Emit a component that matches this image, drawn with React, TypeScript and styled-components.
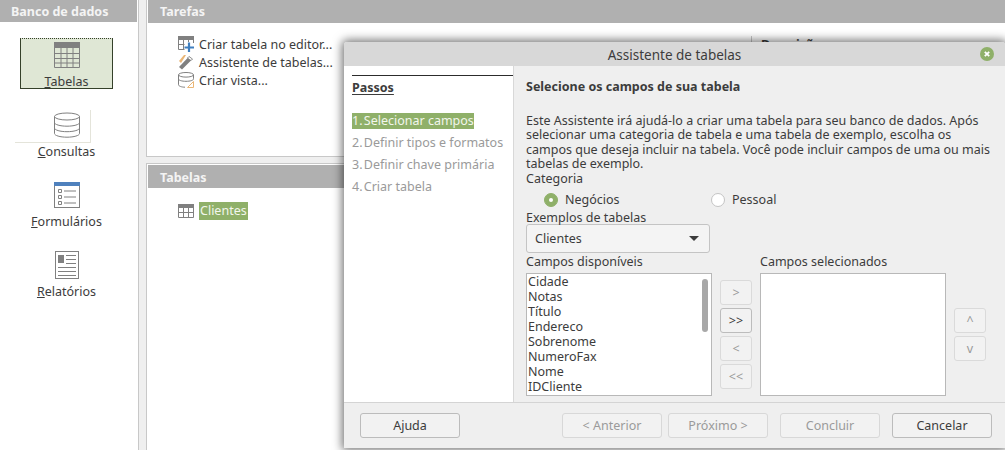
import React from "react";
import styled, { createGlobalStyle } from "styled-components";

const GlobalStyle = createGlobalStyle`
  html, body {
    margin: 0;
    padding: 0;
    width: 1005px;
    height: 450px;
    overflow: hidden;
    background: #efefef;
  }
  body {
    font-family: "Noto Sans", "Open Sans", sans-serif;
    font-size: 12.5px;
    color: #3c3c3c;
  }
`;

const TableIcon = () => (
  <svg width="26" height="26" viewBox="0 0 26 26">
    <rect x="0" y="0" width="26" height="6" fill="#808080" />
    <path d="M.5 6v19.5h25V6M.5 11.5h25M.5 16.5h25M.5 21h25M7 6v19.5M13 6v19.5M19 6v19.5" fill="none" stroke="#808080" />
  </svg>
);

const DatabaseIcon = () => (
  <svg width="26" height="26" viewBox="0 0 26 26">
    <ellipse cx="13" cy="4.500" rx="12.500" ry="3.500" fill="#fff" stroke="#808080" />
    <path d="M.5 4.500v17c0 2 5.500 3.700 12.500 3.700s12.500-1.700 12.500-3.700v-17M.5 10.500c0 2 5.500 3.700 12.500 3.700s12.500-1.700 12.500-3.700M.5 16c0 2 5.500 3.700 12.500 3.700S25.500 18 25.500 16" fill="none" stroke="#808080" />
  </svg>
);

const FormIcon = () => (
  <svg width="26" height="26" viewBox="0 0 26 26">
    <rect x=".5" y=".5" width="25" height="25" fill="#fff" stroke="#808080" />
    <rect x="0" y="0" width="26" height="4" fill="#4f81bd" />
    <path d="M4.500 7.500h3v3h-3zM4.500 13.500h3v3h-3zM4.500 19.500h3v3h-3z" fill="none" stroke="#808080" />
    <path d="M10 9h12M10 15h12M10 21h12" fill="none" stroke="#808080" />
  </svg>
);

const ReportIcon = () => (
  <ReportSvg width="24" height="28" viewBox="0 0 24 28">
    <rect x=".5" y=".5" width="23" height="27" fill="#fff" stroke="#808080" />
    <rect x="3" y="4" width="6" height="8" fill="#808080" />
    <path d="M11 4.500h10M11 8.500h10M11 12.500h10M3 16.500h18M3 20.500h18M3 24.500h18" fill="none" stroke="#808080" />
  </ReportSvg>
);

const SmallTableAddIcon = () => (
  <svg width="16" height="16" viewBox="0 0 16 16">
    <rect x="0" y="0" width="16" height="4" fill="#808080" />
    <path d="M.5 4v9.500h6M15.500 4v3M.5 8.500h6M5.500 4v9.500M10.500 4v2" fill="none" stroke="#808080" />
    <path d="M11 6.500v9.500M6.500 11.500h9.500" fill="none" stroke="#3f7fbf" strokeWidth="2.200" />
  </svg>
);

const WizardIcon = () => (
  <svg width="16" height="16" viewBox="0 0 16 16">
    <path d="M1 7l5-6h2L3 9z" fill="#eab676" />
    <path d="M1 13L11 2.500l3.500 2.500L4 15.500z" fill="#808080" />
    <path d="M11 2.500l3.500 2.500-1.500 1.600L9.500 4z" fill="#fff" stroke="#808080" strokeWidth=".8" />
  </svg>
);

const ViewIcon = () => (
  <svg width="16" height="16" viewBox="0 0 16 16">
    <ellipse cx="8" cy="2.800" rx="7.500" ry="2.300" fill="#fff" stroke="#808080" />
    <path d="M.5 2.800v10c0 1.300 3.300 2.400 6.500 2.400M15.500 2.800v4M.5 7c0 1.300 3.300 2.300 7.500 2.300s7.500-1 7.500-2.300" fill="none" stroke="#808080" />
    <path d="M9.500 15.500l6-6v6z" fill="none" stroke="#eab676" />
  </svg>
);

const SmallTableIcon = () => (
  <svg width="16" height="14" viewBox="0 0 16 14">
    <rect x="0" y="0" width="16" height="4" fill="#808080" />
    <path d="M.5 4v9.500h15V4M.5 8.500h15M5.500 4v9.500M10.500 4v9.500" fill="none" stroke="#808080" />
  </svg>
);

const CloseIcon = () => (
  <svg width="14" height="14" viewBox="0 0 14 14">
    <circle cx="7" cy="7" r="7" fill="#8fb069" />
    <path d="M4.800 4.800l4.400 4.400M9.200 4.800l-4.400 4.400" stroke="#fff" strokeWidth="1.800" />
  </svg>
);

const steps = ["Selecionar campos", "Definir tipos e formatos", "Definir chave primária", "Criar tabela"];

export default function App() {
  return (
    <>
      <GlobalStyle />
      <Page>
        <Sidebar>
          <SideHeader>Banco de dados</SideHeader>
          <SideList>
            <SideItem $active>
              <TableIcon />
              <SideLabel><u>T</u>abelas</SideLabel>
            </SideItem>
            <SideItem>
              <HoverCorner><DatabaseIcon /></HoverCorner>
              <SideLabel><u>C</u>onsultas</SideLabel>
            </SideItem>
            <SideItem>
              <FormIcon />
              <SideLabel><u>F</u>ormulários</SideLabel>
            </SideItem>
            <SideItem>
              <ReportIcon />
              <SideLabel><u>R</u>elatórios</SideLabel>
            </SideItem>
          </SideList>
        </Sidebar>
        <Main>
          <Panel $height={157}>
            <PanelHeader>Tarefas</PanelHeader>
            <TaskArea>
              <TaskList>
                <Task><SmallTableAddIcon />Criar tabela no editor...</Task>
                <Task><WizardIcon />Assistente de tabelas...</Task>
                <Task><ViewIcon />Criar vista...</Task>
              </TaskList>
              <Description>Descrição</Description>
            </TaskArea>
          </Panel>
          <Panel>
            <PanelHeader $inset>Tabelas</PanelHeader>
            <TableRow>
              <SmallTableIcon />
              <SelectedName>Clientes</SelectedName>
            </TableRow>
          </Panel>
        </Main>
      </Page>

      <Dialog>
        <TitleBar>
          Assistente de tabelas
          <CloseSlot><CloseIcon /></CloseSlot>
        </TitleBar>
        <DialogBody>
          <Steps>
            <StepsTitle>Passos</StepsTitle>
            {steps.map((s, i) => (
              <StepItem key={s} $current={i === 0}>
                <StepNumber>{i + 1}. </StepNumber>{s}
              </StepItem>
            ))}
          </Steps>
          <Content>
            <ContentTitle>Selecione os campos de sua tabela</ContentTitle>
            <Intro>
              Este Assistente irá ajudá-lo a criar uma tabela para seu banco de dados. Após
              <br />
              selecionar uma categoria de tabela e uma tabela de exemplo, escolha os
              <br />
              campos que deseja incluir na tabela. Você pode incluir campos de uma ou mais
              <br />
              tabelas de exemplo.
            </Intro>
            <Caption>Categoria</Caption>
            <RadioRow>
              <RadioOption $width={167}><Radio $checked />Negócios</RadioOption>
              <RadioOption><Radio />Pessoal</RadioOption>
            </RadioRow>
            <Caption>Exemplos de tabelas</Caption>
            <Select>
              Clientes
              <Caret />
            </Select>
            <FieldsGrid>
              <Column>
                <ListCaption>Campos disponíveis</ListCaption>
                <ListBox>
                  {["Cidade", "Notas", "Título", "Endereco", "Sobrenome", "NumeroFax", "Nome", "IDCliente"].map((f) => (
                    <ListRow key={f}>{f}</ListRow>
                  ))}
                  <ScrollThumb />
                </ListBox>
              </Column>
              <MoveButtons>
                <SmallButton disabled>&gt;</SmallButton>
                <SmallButton>&gt;&gt;</SmallButton>
                <SmallButton disabled>&lt;</SmallButton>
                <SmallButton disabled>&lt;&lt;</SmallButton>
              </MoveButtons>
              <Column>
                <ListCaption>Campos selecionados</ListCaption>
                <ListBox />
              </Column>
              <OrderButtons>
                <SmallButton disabled>^</SmallButton>
                <SmallButton disabled>v</SmallButton>
              </OrderButtons>
            </FieldsGrid>
          </Content>
        </DialogBody>
        <Footer>
          <FooterButton>Ajuda</FooterButton>
          <FooterRight>
            <FooterButton disabled>&lt; Anterior</FooterButton>
            <FooterButton disabled>Próximo &gt;</FooterButton>
            <FooterButton disabled $gapLeft>Concluir</FooterButton>
            <FooterButton $gapLeft>Cancelar</FooterButton>
          </FooterRight>
        </Footer>
      </Dialog>
    </>
  );
}

const ReportSvg = styled.svg`
  margin: -1px 0 -1px;
`;

const Page = styled.div`
  display: flex;
  width: 1005px;
  height: 450px;
  overflow: hidden;
`;

const Sidebar = styled.aside`
  width: 138px;
  height: 100%;
  flex: none;
  background: #fff;
  border-right: 1px solid #c8c8c8;
`;

const SideHeader = styled.div`
  height: 22px;
  margin-right: 1px;
  padding-left: 11px;
  line-height: 23px;
  background: #b0b0b0;
  color: #f4f4f4;
  font-weight: 700;
`;

const SideList = styled.div`
  display: flex;
  flex-direction: column;
  align-items: center;
  padding: 16px 5px 0 0;
`;

const SideItem = styled.div<{ $active?: boolean }>`
  box-sizing: border-box;
  width: 93px;
  height: 51px;
  margin-bottom: 19px;
  padding-top: 3px;
  display: flex;
  flex-direction: column;
  align-items: center;
  background: ${(p) => (p.$active ? "#dfe7d5" : "transparent")};
  border: 1px solid ${(p) => (p.$active ? "#35412a" : "transparent")};
  border-top-style: ${(p) => (p.$active ? "dotted" : "solid")};

  & > svg {
    flex: none;
  }
`;

const HoverCorner = styled.div`
  position: relative;
  height: 26px;
  display: flex;

  &::after {
    content: "";
    position: absolute;
    left: -39px;
    top: -2px;
    width: 75px;
    height: 32px;
    border-right: 1px solid #e4e4da;
    border-bottom: 1px solid #e4e4da;
  }
`;

const SideLabel = styled.div`
  position: relative;
  margin-top: 6px;
  line-height: 16px;
  white-space: nowrap;
`;

const Main = styled.main`
  flex: 1;
  min-width: 0;
  padding-left: 7px;
  display: flex;
  flex-direction: column;
  gap: 6px;
`;

const Panel = styled.section<{ $height?: number }>`
  box-sizing: border-box;
  flex: ${(p) => (p.$height ? `0 0 ${p.$height}px` : "1")};
  background: #fff;
  border: 1px solid #c8c8c8;
  border-width: ${(p) => (p.$height ? "0 0 1px 1px" : "1px 0 0 1px")};
  padding-left: 1px;
`;

const PanelHeader = styled.div<{ $inset?: boolean }>`
  height: 23px;
  margin-top: ${(p) => (p.$inset ? "1px" : "0")};
  padding-left: 12px;
  line-height: ${(p) => (p.$inset ? "25px" : "23px")};
  background: #b0b0b0;
  color: #f4f4f4;
  font-weight: 700;
`;

const TaskArea = styled.div`
  display: flex;
  justify-content: space-between;
  height: 133px;
`;

const TaskList = styled.div`
  padding: 13px 0 0 30px;
  display: flex;
  flex-direction: column;
  gap: 2px;
`;

const Task = styled.div`
  display: flex;
  align-items: center;
  gap: 5px;
  height: 16px;
  white-space: nowrap;
`;

const Description = styled.div`
  box-sizing: border-box;
  width: 254px;
  height: 132px;
  margin-top: 13px;
  padding-left: 9px;
  border-left: 1px solid #c8c8c8;
  font-weight: 700;
`;

const TableRow = styled.div`
  display: flex;
  align-items: center;
  gap: 5px;
  padding: 14px 0 0 30px;
`;

const SelectedName = styled.span`
  background: #8fb069;
  color: #f2f6ec;
  padding: 0 1px;
  line-height: 18px;
`;

const Dialog = styled.div`
  position: absolute;
  left: 344px;
  top: 42px;
  width: 661px;
  height: 406px;
  display: flex;
  flex-direction: column;
  background: #efefef;
  box-shadow: 0 0 10px 2px rgba(0, 0, 0, 0.55);
  border-radius: 3px 3px 0 0;
`;

const TitleBar = styled.div`
  position: relative;
  flex: none;
  height: 24px;
  line-height: 26px;
  text-align: center;
  background: #d8d8d8;
  border-radius: 3px 3px 0 0;
  font-size: 13.500px;
`;

const CloseSlot = styled.span`
  position: absolute;
  right: 11px;
  top: 5px;
  display: flex;
`;

const DialogBody = styled.div`
  flex: none;
  height: 336px;
  display: flex;
  border-bottom: 1px solid #d4d4d4;
`;

const Steps = styled.div`
  box-sizing: border-box;
  flex: none;
  width: 170px;
  height: 100%;
  margin: 0;
  padding: 9px 0 0 8px;
  background: #fff;
  border-right: 1px solid #d8d8d8;
`;

const StepsTitle = styled.div`
  border-top: 1px solid #2c2c2c;
  padding-top: 4px;
  margin-bottom: 17px;
  line-height: 16px;
  font-weight: 700;
  text-decoration: underline;
  text-underline-offset: 2px;
`;

const StepItem = styled.div<{ $current?: boolean }>`
  width: fit-content;
  height: ${(p) => (p.$current ? "16px" : "22px")};
  margin-bottom: ${(p) => (p.$current ? "6px" : "0")};
  line-height: 16px;
  white-space: nowrap;
  color: ${(p) => (p.$current ? "#f2f6ec" : "#9a9a9a")};
  background: ${(p) => (p.$current ? "#8fb069" : "transparent")};
`;

const StepNumber = styled.span`
  margin-right: -2px;
`;

const Content = styled.div`
  flex: 1;
  min-width: 0;
  padding: 13px 0 0 12px;
`;

const ContentTitle = styled.div`
  line-height: 16px;
  font-weight: 700;
  margin-bottom: 19px;
`;

const Intro = styled.div`
  line-height: 14.300px;
  white-space: nowrap;
`;

const Caption = styled.div`
  line-height: 16px;
`;

const RadioRow = styled.div`
  display: flex;
  height: 23px;
  align-items: center;
  padding: 2px 0 0 18px;
  box-sizing: border-box;
`;

const RadioOption = styled.label<{ $width?: number }>`
  display: flex;
  align-items: center;
  gap: 7px;
  width: ${(p) => (p.$width ? `${p.$width}px` : "auto")};
`;

const Radio = styled.span<{ $checked?: boolean }>`
  box-sizing: border-box;
  width: 14px;
  height: 14px;
  border-radius: 50%;
  background: ${(p) => (p.$checked ? "#8fb069" : "#fff")};
  border: 1px solid ${(p) => (p.$checked ? "#8fb069" : "#c4c4c4")};
  display: flex;
  align-items: center;
  justify-content: center;

  ${(p) => p.$checked && `
    &::after {
      content: "";
      width: 4px;
      height: 4px;
      border-radius: 50%;
      background: #fff;
    }
  `}
`;

const Select = styled.div`
  box-sizing: border-box;
  width: 184px;
  height: 29px;
  margin-top: -2px;
  padding: 0 10px 0 8px;
  display: flex;
  align-items: center;
  justify-content: space-between;
  background: #f4f4f4;
  border: 1px solid #c4c4c4;
  border-radius: 3px;
`;

const Caret = styled.span`
  width: 0;
  height: 0;
  border-left: 5px solid transparent;
  border-right: 5px solid transparent;
  border-top: 5px solid #3c3c3c;
`;

const FieldsGrid = styled.div`
  display: grid;
  grid-template-columns: 186px 48px 186px 48px;
`;

const Column = styled.div`
  min-width: 0;
`;

const ListCaption = styled.div`
  line-height: 17px;
  height: 20px;
`;

const ListBox = styled.div`
  position: relative;
  box-sizing: border-box;
  height: 123px;
  padding: 0 0 0 1px;
  background: #fff;
  border: 1px solid #b8b8b8;
`;

const ListRow = styled.div`
  line-height: 15px;
  white-space: nowrap;
`;

const ScrollThumb = styled.span`
  position: absolute;
  right: 3px;
  top: 5px;
  width: 6px;
  height: 53px;
  border-radius: 3px;
  background: #a8a8a8;
`;

const MoveButtons = styled.div`
  display: flex;
  flex-direction: column;
  gap: 3px;
  padding: 27px 0 0 8px;
`;

const OrderButtons = styled(MoveButtons)`
  padding-top: 55px;
`;

const SmallButton = styled.button`
  box-sizing: border-box;
  width: 32px;
  height: 25px;
  padding: 0;
  font: inherit;
  color: ${(p) => (p.disabled ? "#9a9a9a" : "#3c3c3c")};
  background: #f2f2f2;
  border: 1px solid ${(p) => (p.disabled ? "#dadada" : "#bcbcbc")};
  border-radius: 3px;
`;

const Footer = styled.div`
  flex: 1;
  display: flex;
  justify-content: space-between;
  padding: 10px 13px 0 16px;
`;

const FooterRight = styled.div`
  display: flex;
  gap: 6px;
`;

const FooterButton = styled.button<{ $gapLeft?: boolean }>`
  box-sizing: border-box;
  width: 100px;
  height: 25px;
  margin-left: ${(p) => (p.$gapLeft ? "6px" : "0")};
  padding: 0;
  font: inherit;
  color: ${(p) => (p.disabled ? "#9a9a9a" : "#3c3c3c")};
  background: #f2f2f2;
  border: 1px solid ${(p) => (p.disabled ? "#d8d8d8" : "#bcbcbc")};
  border-radius: 3px;
`;
